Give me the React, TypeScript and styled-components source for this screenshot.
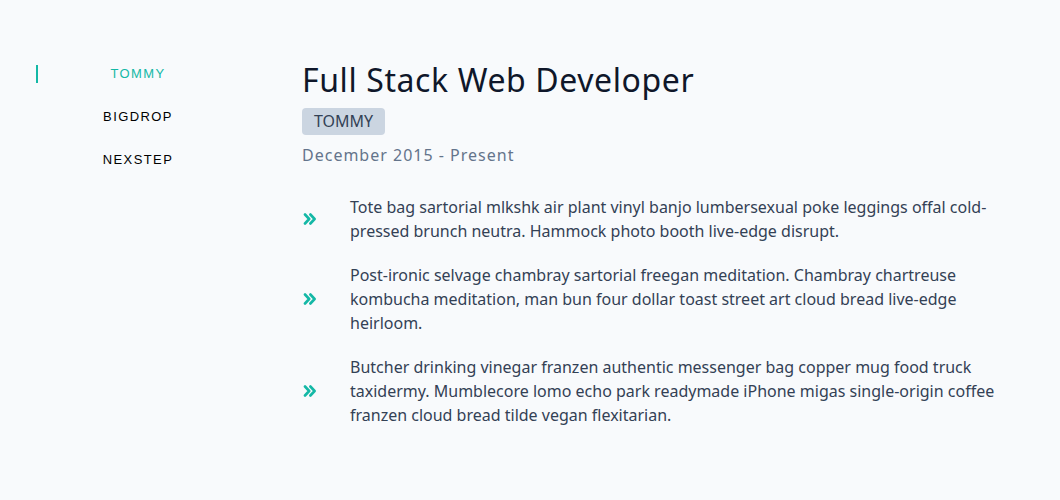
import React, { useState } from "react";
import styled, { createGlobalStyle } from "styled-components";

const GlobalStyle = createGlobalStyle`
  html, body { margin: 0; padding: 0; background: #f8fafc; }
  body { font-family: "Noto Sans", "Open Sans", sans-serif; }
  * { box-sizing: border-box; }
`;

const Page = styled.div`
  display: flex;
  align-items: flex-start;
  gap: 64px;
  padding: 64px 36px 40px 36px;
  min-height: 500px;
`;

const Nav = styled.nav`
  display: flex;
  flex-direction: column;
  gap: 25px;
  width: 202px;
  flex-shrink: 0;
  padding-top: 1px;
`;

const NavButton = styled.button<{ $active?: boolean }>`
  display: block;
  width: 100%;
  height: 18px;
  padding: 0;
  margin: 0;
  background: transparent;
  border: none;
  border-left: 2px solid ${(p) => (p.$active ? "#14b8a6" : "transparent")};
  color: ${(p) => (p.$active ? "#14b8a6" : "#000000")};
  font-family: "Liberation Sans", Arial, sans-serif;
  font-size: 13px;
  line-height: 18px;
  letter-spacing: 1.4px;
  text-transform: uppercase;
  text-align: center;
  cursor: pointer;
`;

const Content = styled.section`
  display: flex;
  flex-direction: column;
  flex: 1;
  max-width: 700px;
`;

const Title = styled.h2`
  margin: 0;
  font-size: 32px;
  font-weight: 400;
  line-height: 32px;
  color: #0f172a;
  letter-spacing: 0.6px;
`;

const Badge = styled.span`
  align-self: flex-start;
  margin-top: 12px;
  padding: 2px 12px;
  background: #cbd5e1;
  color: #334155;
  border-radius: 4px;
  font-size: 16px;
  line-height: 23px;
`;

const DateLine = styled.p`
  margin: 8px 0 0 0;
  font-size: 16px;
  line-height: 24px;
  color: #64748b;
  letter-spacing: 1px;
`;

const List = styled.ul`
  list-style: none;
  margin: 28px 0 0 0;
  padding: 0;
  display: flex;
  flex-direction: column;
  gap: 20px;
`;

const Item = styled.li`
  display: flex;
  align-items: center;
  gap: 32px;
`;

const Bullet = styled.span`
  display: flex;
  width: 16px;
  padding-left: 1px;
  flex-shrink: 0;
  color: #14b8a6;
`;

const ItemText = styled.p`
  margin: 0;
  font-size: 16px;
  line-height: 24px;
  color: #334155;
  max-width: 652px;
`;

const DoubleChevron = () => (
  <svg width="14" height="12" viewBox="0 0 14 12" fill="none">
    <path
      d="M2 1.5 L6.2 6 L2 10.5 M7.4 1.5 L11.6 6 L7.4 10.5"
      stroke="currentColor"
      strokeWidth="2.6"
      strokeLinecap="round"
      strokeLinejoin="round"
    />
  </svg>
);

const companies = ["Tommy", "Bigdrop", "Nexstep"];

const items = [
  "Tote bag sartorial mlkshk air plant vinyl banjo lumbersexual poke leggings offal cold-pressed brunch neutra. Hammock photo booth live-edge disrupt.",
  "Post-ironic selvage chambray sartorial freegan meditation. Chambray chartreuse kombucha meditation, man bun four dollar toast street art cloud bread live-edge heirloom.",
  "Butcher drinking vinegar franzen authentic messenger bag copper mug food truck taxidermy. Mumblecore lomo echo park readymade iPhone migas single-origin coffee franzen cloud bread tilde vegan flexitarian.",
];

export default function App() {
  const [active, setActive] = useState(0);
  return (
    <>
      <GlobalStyle />
      <Page>
        <Nav>
          {companies.map((c, i) => (
            <NavButton key={c} $active={i === active} onClick={() => setActive(i)}>
              {c}
            </NavButton>
          ))}
        </Nav>
        <Content>
          <Title>Full Stack Web Developer</Title>
          <Badge>TOMMY</Badge>
          <DateLine>December 2015 - Present</DateLine>
          <List>
            {items.map((t, i) => (
              <Item key={i}>
                <Bullet>
                  <DoubleChevron />
                </Bullet>
                <ItemText>{t}</ItemText>
              </Item>
            ))}
          </List>
        </Content>
      </Page>
    </>
  );
}
